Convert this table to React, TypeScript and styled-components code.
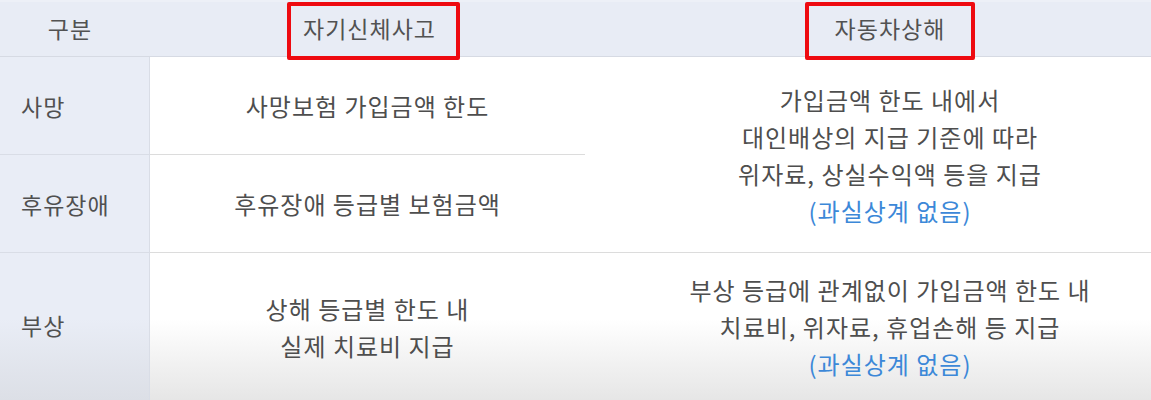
import styled, { createGlobalStyle } from "styled-components";

const GlobalStyle = createGlobalStyle`
  html, body {
    margin: 0;
    padding: 0;
    background: #ffffff;
    overflow: hidden;
  }
  body {
    font-family: "Noto Sans CJK KR", "Noto Sans", sans-serif;
    color: #4e4e4e;
  }
`;

const Table = styled.div`
  width: 1195px;
  height: 400px;
  display: grid;
  grid-template-columns: 150px 435px 1fr;
  grid-template-rows: 57px 98px 98px 1fr;
`;

const HeadCell = styled.div`
  background: #e8ecf5;
  border-top: 2px solid #edf0f7;
  border-bottom: 1px solid #d6dae3;
  display: flex;
  align-items: flex-start;
  justify-content: center;
  font-size: 23px;
  letter-spacing: 1px;
  line-height: 1;
  color: #525252;
  position: relative;
  z-index: 1;
`;

const HeadLabel = styled.span`
  margin-top: 15px;
  margin-right: 10px;
`;

const Highlight = styled.span<{ $shift?: number; $width: number }>`
  box-sizing: border-box;
  width: ${(p) => p.$width}px;
  height: 58px;
  margin-left: ${(p) => p.$shift ?? 0}px;
  border: 4px solid #ee0a10;
  border-radius: 2px;
  display: flex;
  align-items: flex-start;
  justify-content: center;
  padding-top: 11px;
  padding-right: ${(p) => (p.$shift ? 8 : 0)}px;
`;

const LabelCell = styled.div<{ $bottom?: boolean }>`
  background: ${(p) =>
    p.$bottom
      ? "linear-gradient(to bottom, #e9edf6 45%, #dcdfe6 100%)"
      : "#e9edf6"};
  border-right: 1px solid #d9dde6;
  border-bottom: ${(p) => (p.$bottom ? "none" : "1px solid #d9dde6")};
  display: flex;
  align-items: center;
  padding-left: 21px;
  padding-bottom: ${(p) => (p.$bottom ? 4 : 0)}px;
  font-size: 23px;
  letter-spacing: 1px;
  color: #505050;
`;

const BodyCell = styled.div<{ $span?: number; $bottom?: boolean; $line?: boolean }>`
  grid-row: ${(p) => (p.$span ? `span ${p.$span}` : "auto")};
  background: ${(p) =>
    p.$bottom
      ? "linear-gradient(to bottom, #ffffff 45%, #e6e6e6 100%)"
      : "#ffffff"};
  border-bottom: ${(p) => (p.$line ? "1px solid #dcdcdc" : "none")};
  display: flex;
  flex-direction: column;
  align-items: center;
  justify-content: center;
  text-align: center;
  font-size: 24px;
  letter-spacing: 1px;
  line-height: 37px;
  color: #4e4e4e;
`;

const Line = styled.span<{ $accent?: boolean }>`
  display: block;
  white-space: nowrap;
  color: ${(p) => (p.$accent ? "#3c88d8" : "inherit")};
`;

type Row = {
  label: string;
  self: string[];
  car?: { lines: string[]; span: number };
};

const rows: Row[] = [
  {
    label: "사망",
    self: ["사망보험 가입금액 한도"],
    car: {
      lines: ["가입금액 한도 내에서", "대인배상의 지급 기준에 따라", "위자료, 상실수익액 등을 지급"],
      span: 2,
    },
  },
  { label: "후유장애", self: ["후유장애 등급별 보험금액"] },
  {
    label: "부상",
    self: ["상해 등급별 한도 내", "실제 치료비 지급"],
    car: {
      lines: ["부상 등급에 관계없이 가입금액 한도 내", "치료비, 위자료, 휴업손해 등 지급"],
      span: 1,
    },
  },
];

export default function App() {
  return (
    <>
      <GlobalStyle />
      <Table>
        <HeadCell>
          <HeadLabel>구분</HeadLabel>
        </HeadCell>
        <HeadCell>
          <Highlight $width={173} $shift={12}>
            자기신체사고
          </Highlight>
        </HeadCell>
        <HeadCell>
          <Highlight $width={170} $shift={0}>
            자동차상해
          </Highlight>
        </HeadCell>

        {rows.map((row, i) => {
          const last = i === rows.length - 1;
          return [
            <LabelCell key={`l${i}`} $bottom={last}>
              {row.label}
            </LabelCell>,
            <BodyCell key={`s${i}`} $bottom={last} $line={!last}>
              {row.self.map((t) => (
                <Line key={t}>{t}</Line>
              ))}
            </BodyCell>,
            row.car ? (
              <BodyCell key={`c${i}`} $span={row.car.span} $bottom={last} $line={!last}>
                {row.car.lines.map((t) => (
                  <Line key={t}>{t}</Line>
                ))}
                <Line $accent>(과실상계 없음)</Line>
              </BodyCell>
            ) : null,
          ];
        })}
      </Table>
    </>
  );
}
